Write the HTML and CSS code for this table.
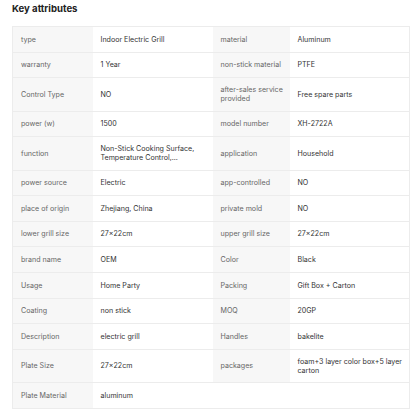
FILE: index.html
```html
<!DOCTYPE html>
<html>
<head>
<meta charset="utf-8">
<link rel="stylesheet" href="styles.css">
</head>
<body>
<div class="wrap">
  <h2 class="title">Key attributes</h2>
  <table class="attrs">
    <colgroup><col class="c-l"><col class="c-v"><col class="c-l2"><col class="c-v"></colgroup>
    <tr><td class="k">type</td><td class="v">Indoor Electric Grill</td><td class="k">material</td><td class="v">Aluminum</td></tr>
    <tr><td class="k">warranty</td><td class="v">1 Year</td><td class="k">non-stick material</td><td class="v">PTFE</td></tr>
    <tr><td class="k">Control Type</td><td class="v">NO</td><td class="k">after-sales service provided</td><td class="v">Free spare parts</td></tr>
    <tr><td class="k">power (w)</td><td class="v">1500</td><td class="k">model number</td><td class="v">XH-2722A</td></tr>
    <tr><td class="k">function</td><td class="v">Non-Stick Cooking Surface, Temperature Control,...</td><td class="k">application</td><td class="v">Household</td></tr>
    <tr><td class="k">power source</td><td class="v">Electric</td><td class="k">app-controlled</td><td class="v">NO</td></tr>
    <tr><td class="k">place of origin</td><td class="v">Zhejiang, China</td><td class="k">private mold</td><td class="v">NO</td></tr>
    <tr><td class="k">lower grill size</td><td class="v">27×22cm</td><td class="k">upper grill size</td><td class="v">27×22cm</td></tr>
    <tr><td class="k">brand name</td><td class="v">OEM</td><td class="k">Color</td><td class="v">Black</td></tr>
    <tr><td class="k">Usage</td><td class="v">Home Party</td><td class="k">Packing</td><td class="v">Gift Box + Carton</td></tr>
    <tr><td class="k">Coating</td><td class="v">non stick</td><td class="k">MOQ</td><td class="v">20GP</td></tr>
    <tr><td class="k">Description</td><td class="v">electric grill</td><td class="k">Handles</td><td class="v">bakelite</td></tr>
    <tr><td class="k">Plate Size</td><td class="v">27×22cm</td><td class="k">packages</td><td class="v">foam+3 layer color box+5 layer carton</td></tr>
    <tr><td class="k">Plate Material</td><td class="v">aluminum</td><td class="e"></td><td class="e"></td></tr>
  </table>
</div>
</body>
</html>
```
FILE: styles.css
```css
html, body {
  margin: 0;
  padding: 0;
  background: #ffffff;
}
body {
  font-family: Inter, "Liberation Sans", sans-serif;
}
.wrap {
  padding: 0 7px 0 12px;
}
.title {
  margin: 0;
  height: 26px;
  padding-top: 3px;
  box-sizing: border-box;
  font-size: 9.6px;
  line-height: 12px;
  font-weight: 700;
  color: #222;
}
.attrs {
  width: 397px;
  table-layout: fixed;
  border-collapse: collapse;
  border: 1px solid #ececec;
}
.c-l { width: 80px; }
.c-v { width: 120px; }
.c-l2 { width: 77px; }
.attrs tr {
  height: 25.6px;
}
.attrs td {
  border-bottom: 1px solid #ececec;
  padding: 6.8px 4px 6.8px 8px;
  font-size: 7.1px;
  line-height: 9.4px;
  vertical-align: middle;
}
.k {
  background: #f7f7f7;
  color: #666;
}
.v {
  color: #333;
}
.e {
  background: #fff;
}
```
